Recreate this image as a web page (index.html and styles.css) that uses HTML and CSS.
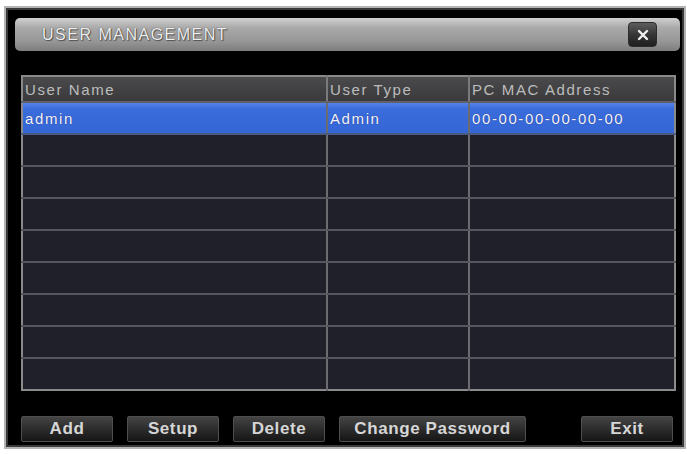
FILE: index.html
```html
<!DOCTYPE html>
<html>
<head>
    <link rel="stylesheet" href="styles.css">
</head>
<body>
    <div class="dialog">
        <div class="title-bar">
            <span class="title">User Management</span>
            <button class="close-btn">
                <svg width="12" height="12" viewBox="0 0 12 12">
                    <path d="M2 2 L10 10 M10 2 L2 10" stroke="#f0f0f0" stroke-width="2.4" stroke-linecap="round"/>
                </svg>
            </button>
        </div>

        <table class="user-table">
            <colgroup>
                <col class="col-name">
                <col class="col-type">
                <col class="col-mac">
            </colgroup>
            <thead>
                <tr>
                    <th>User Name</th>
                    <th>User Type</th>
                    <th>PC MAC Address</th>
                </tr>
            </thead>
            <tbody>
                <tr class="selected">
                    <td>admin</td>
                    <td>Admin</td>
                    <td>00-00-00-00-00-00</td>
                </tr>
                <tr><td></td><td></td><td></td></tr>
                <tr><td></td><td></td><td></td></tr>
                <tr><td></td><td></td><td></td></tr>
                <tr><td></td><td></td><td></td></tr>
                <tr><td></td><td></td><td></td></tr>
                <tr><td></td><td></td><td></td></tr>
                <tr><td></td><td></td><td></td></tr>
                <tr><td></td><td></td><td></td></tr>
            </tbody>
        </table>

        <div class="button-row">
            <button class="btn">Add</button>
            <button class="btn">Setup</button>
            <button class="btn">Delete</button>
            <button class="btn btn-wide">Change Password</button>
            <button class="btn btn-exit">Exit</button>
        </div>
    </div>
</body>
</html>
```

FILE: styles.css
```css
body {
    margin: 0;
    background: #fff;
    font-family: "Liberation Sans", Arial, sans-serif;
}
.dialog {
    box-sizing: border-box;
    margin: 6px 0 0 4px;
    width: 682px;
    height: 443px;
    background: #000;
    border: 2px solid #b4b4b4;
    box-shadow: inset 0 0 0 2px #3a3a3a;
    padding: 10px 4px 0 9px;
}
.title-bar {
    display: flex;
    align-items: center;
    height: 33px;
    border-radius: 5px;
    background: linear-gradient(180deg, #cfcfcf 0%, #a9a9a9 30%, #979797 70%, #7d7d7d 100%);
    padding: 0 23px 0 27px;
}
.title {
    flex: 1;
    text-transform: uppercase;
    font-size: 16px;
    letter-spacing: 1.5px;
    color: #eeeeee;
    text-shadow: 0 0 1px #333, 1px 1px 1px #555;
}
.close-btn {
    width: 29px;
    height: 25px;
    padding: 0;
    border: 1px solid #2c2c2c;
    border-radius: 4px;
    background: linear-gradient(180deg, #5e5e5e 0%, #363636 50%, #1f1f1f 100%);
    display: flex;
    align-items: center;
    justify-content: center;
}
.user-table {
    margin: 24px 0 0 6px;
    width: 653px;
    table-layout: fixed;
    border-collapse: collapse;
    border: 2px solid #8a8a8a;
    font-size: 15px;
    letter-spacing: 1.6px;
}
.col-name { width: 305px; }
.col-type { width: 142px; }
.col-mac { width: 206px; }
.user-table th {
    height: 24px;
    padding: 0 0 0 2px;
    text-align: left;
    font-weight: normal;
    color: #bcbcbc;
    background: linear-gradient(180deg, #4a4a4c 0%, #3a3a3c 100%);
    border-left: 2px solid #7a7a7a;
    border-bottom: 2px solid #5f6068;
}
.user-table td {
    height: 30px;
    padding: 0 0 0 2px;
    background: #1f2029;
    border-left: 2px solid #6c6c70;
    border-bottom: 2px solid #56575e;
    color: #fff;
}
.user-table tr > :first-child {
    border-left: none;
}
.user-table tr.selected td {
    background: linear-gradient(180deg, #5583e8 0%, #3a6cdc 20%, #3566d6 100%);
    border-bottom-color: #4a5a80;
    color: #f4f4ff;
    text-shadow: 0 0 1px #1a2a70;
}
.user-table tbody tr:last-child td {
    border-bottom: none;
}
.button-row {
    display: flex;
    gap: 14px;
    margin: 25px 0 0 6px;
    width: 652px;
}
.btn {
    box-sizing: border-box;
    width: 92px;
    height: 26px;
    padding: 0;
    border: 1px solid #4e4e4e;
    border-radius: 2px;
    background: linear-gradient(180deg, #444 0%, #2c2c2c 50%, #161616 100%);
    color: #d6d6d6;
    font-family: "Liberation Sans", Arial, sans-serif;
    font-size: 17px;
    font-weight: bold;
    letter-spacing: 0.6px;
}
.btn-wide {
    width: 187px;
}
.btn-exit {
    margin-left: auto;
}
```
